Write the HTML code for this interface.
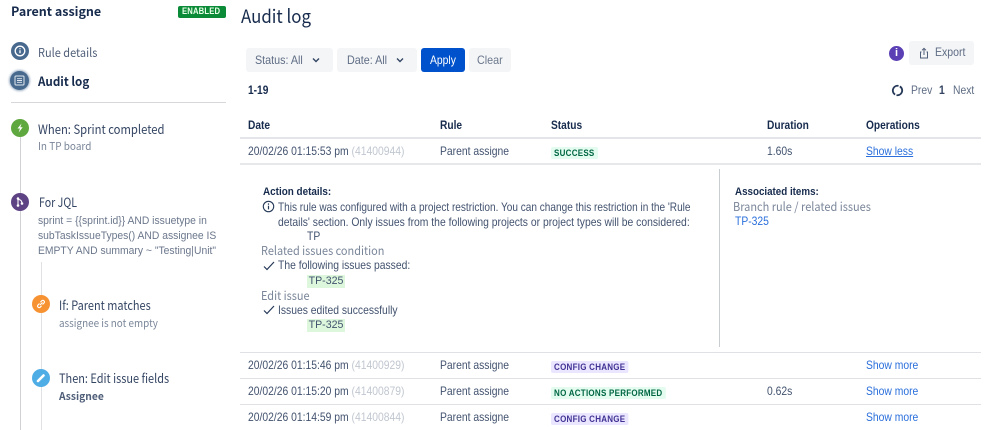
<!DOCTYPE html>
<html><head><meta charset="utf-8">
<style>
html,body{margin:0;padding:0;background:#fff}
#p{position:relative;width:999px;height:430px;overflow:hidden;background:#fff;font-family:"Liberation Sans",sans-serif;font-size:11.7px;color:#42526e}
#p div,#p svg{position:absolute}
.t{white-space:nowrap;line-height:14px;transform:scaleX(.885);transform-origin:left center}
.n{font-family:"Noto Sans CJK JP","Liberation Sans",sans-serif;transform:scaleX(.9)}
.d{color:#42526e}
.g{color:#c1c7d0}
.h{font-weight:bold;color:#172b4d;font-size:11.5px}
.l{background:#dfe1e4;height:1px}
.lk{color:#2a6fdb}
.lz{font-size:9.2px;font-weight:bold;letter-spacing:.3px;height:12px;line-height:12px;padding:0 3.5px;border-radius:2px;white-space:nowrap;transform:scaleX(.87);transform-origin:left center}
.pu{background:#eae6ff;color:#403294}
.gr{background:#e3fcef;color:#006644}
.btn{background:#f4f5f7;border-radius:3px;height:24px}
.c{border-radius:50%}
.tag{background:#dcf7dc;color:#42526e;width:38px;text-align:center;height:13px;line-height:13px;white-space:nowrap;font-size:10.6px}
</style></head><body><div id="p">

<div class="t n" style="left:11px;top:4px;font-weight:bold;font-size:12.5px;color:#172b4d;transform:none">Parent assigne</div>
<div style="left:178px;top:6px;width:48px;height:12px;background:#0b8a37;border-radius:2px"></div>
<div class="t" style="left:182px;top:5px;color:#e8ffe8;font-size:9.6px;font-weight:bold;letter-spacing:.2px;transform:scaleX(.8)">ENABLED</div>

<div class="c" style="left:11px;top:42px;width:18px;height:18px;background:#48698e"></div>
<svg style="left:11px;top:42px" width="18" height="18" viewBox="0 0 18 18"><circle cx="9" cy="9" r="4.8" fill="none" stroke="#fff" stroke-width="1.3"/><path d="M9 8.3v3M9 6.2v1" stroke="#fff" stroke-width="1.3"/></svg>
<div class="t n" style="left:38px;top:45px;font-size:12.2px;color:#505f79">Rule details</div>

<div class="c" style="left:10px;top:71px;width:19px;height:19px;background:#48698e;box-shadow:0 0 2px 1px #9fb1c6"></div>
<svg style="left:10px;top:71px" width="19" height="19" viewBox="0 0 19 19"><rect x="5" y="5" width="9" height="9" rx="1" fill="none" stroke="#dfe6ee" stroke-width="1"/><path d="M7 7.7h5M7 9.5h5M7 11.3h5" stroke="#dfe6ee" stroke-width=".9"/></svg>
<div class="t n" style="left:38px;top:74px;font-weight:bold;font-size:12.5px;color:#172b4d;transform:scaleX(.93)">Audit log</div>

<div style="left:11px;top:102px;width:215px;height:1px;background:#d5d7da"></div>

<div style="left:20px;top:130px;width:1px;height:300px;background:#d0d2d5"></div>
<div style="left:41px;top:262px;width:1px;height:168px;background:#dfe1e4"></div>

<div class="c" style="left:11px;top:119px;width:18px;height:18px;background:#5fa83f"></div>
<svg style="left:11px;top:119px" width="18" height="18" viewBox="0 0 18 18"><path d="M10.5 4.5L6.5 9.5h2.4l-1.2 4 4-5.2H9.3z" fill="#fff"/></svg>
<div class="t n" style="left:38px;top:122px;font-size:12.5px;color:#344563">When: Sprint completed</div>
<div class="t n" style="left:38px;top:140px;font-size:10.5px;color:#7a8699;transform:scaleX(.95)">In TP board</div>

<div class="c" style="left:11px;top:193px;width:18px;height:18px;background:#5e4384"></div>
<svg style="left:11px;top:193px" width="18" height="18" viewBox="0 0 18 18"><path d="M7 5v8M7 6.5c3 0 4 1.5 4 4" fill="none" stroke="#fff" stroke-width="1.1"/><circle cx="7" cy="5.5" r="1.3" fill="#fff"/><circle cx="7" cy="12.5" r="1.3" fill="#fff"/><circle cx="11" cy="10.5" r="1.3" fill="#fff"/></svg>
<div class="t n" style="left:39px;top:195px;font-size:12.5px;color:#344563;transform:scaleX(.85)">For JQL</div>
<div class="t" style="left:38px;top:214px;font-size:11.2px;color:#6b778c;line-height:15px;transform:scaleX(.925)">sprint = {{sprint.id}} AND issuetype in<br>subTaskIssueTypes() AND assignee IS<br>EMPTY AND summary ~ "Testing|Unit"</div>

<div class="c" style="left:32px;top:295px;width:18px;height:18px;background:#f79232"></div>
<svg style="left:32px;top:295px" width="18" height="18" viewBox="0 0 18 18"><path d="M8 10l2.5-2.5M7.5 8.5L5.8 10.2a1.6 1.6 0 0 0 2.2 2.2l1.6-1.7M10.5 9.5l1.7-1.7A1.6 1.6 0 0 0 10 5.6L8.4 7.3" fill="none" stroke="#fff" stroke-width="1.1"/></svg>
<div class="t n" style="left:59px;top:298px;font-size:12.5px;color:#344563;transform:scaleX(.875)">If: Parent matches</div>
<div class="t n" style="left:59px;top:317px;font-size:10.5px;color:#7a8699;transform:scaleX(.94)">assignee is not empty</div>

<div class="c" style="left:32px;top:369px;width:18px;height:18px;background:#4fade6"></div>
<svg style="left:32px;top:369px" width="18" height="18" viewBox="0 0 18 18"><path d="M6 12l5.5-5.5" stroke="#fff" stroke-width="2.6" stroke-linecap="round"/></svg>
<div class="t n" style="left:59px;top:371px;font-size:12.5px;color:#344563;transform:scaleX(.875)">Then: Edit issue fields</div>
<div class="t n" style="left:59px;top:390px;font-size:10.5px;font-weight:bold;color:#505f79;transform:scaleX(.98)">Assignee</div>

<div class="t n" style="left:241px;top:5px;font-size:18.5px;line-height:22px;color:#172b4d;transform:scaleX(.91)">Audit log</div>

<div class="btn" style="left:246px;top:48px;width:87px"></div>
<div class="t" style="left:255px;top:54px;color:#5e6c84;transform:scaleX(.92)">Status: All</div>
<svg style="left:312px;top:56px" width="8" height="8" viewBox="0 0 8 8"><path d="M1 2.5l3 3 3-3" fill="none" stroke="#344563" stroke-width="1.4"/></svg>
<div class="btn" style="left:337px;top:48px;width:80px"></div>
<div class="t" style="left:347px;top:54px;color:#5e6c84;transform:scaleX(.92)">Date: All</div>
<svg style="left:396px;top:56px" width="8" height="8" viewBox="0 0 8 8"><path d="M1 2.5l3 3 3-3" fill="none" stroke="#344563" stroke-width="1.4"/></svg>
<div class="btn" style="left:421px;top:48px;width:44px;background:#0052cc"></div>
<div class="t" style="left:430px;top:54px;color:#fff;">Apply</div>
<div class="btn" style="left:469px;top:48px;width:42px"></div>
<div class="t" style="left:477px;top:54px;color:#6b778c;transform:scaleX(.92)">Clear</div>

<div class="c" style="left:889px;top:46px;width:15px;height:15px;background:#5b3fb5;color:#fff;font-size:11px;font-weight:bold;text-align:center;line-height:15px">i</div>
<div class="btn" style="left:909px;top:41px;width:65px"></div>
<div class="t" style="left:935px;top:46px;color:#5e6c84;transform:scaleX(.9)">Export</div>
<svg style="left:918px;top:47px" width="12" height="12" viewBox="0 0 12 12"><path d="M3.5 5H2.5v6h7V5H8.5M6 8V1.5M4 3.3L6 1.3l2 2" fill="none" stroke="#505f79" stroke-width="1"/></svg>

<div class="t h" style="left:248px;top:84px">1-19</div>
<svg style="left:891px;top:84px" width="13" height="13" viewBox="0 0 13 13"><circle cx="6.5" cy="6.5" r="4.7" fill="none" stroke="#253858" stroke-width="1.8" stroke-dasharray="13.2 1.5" transform="rotate(-60 6.5 6.5)"/></svg>
<div class="t" style="left:911px;top:84px;color:#5e6c84">Prev</div>
<div class="t" style="left:939px;top:84px;font-weight:bold;color:#344563">1</div>
<div class="t" style="left:953px;top:84px;color:#5e6c84">Next</div>

<div class="t h" style="left:248px;top:119px">Date</div>
<div class="t h" style="left:440px;top:119px">Rule</div>
<div class="t h" style="left:551px;top:119px">Status</div>
<div class="t h" style="left:767px;top:119px">Duration</div>
<div class="t h" style="left:866px;top:119px">Operations</div>
<div style="left:240px;top:137px;width:741px;height:2px;background:#e3e5e8"></div>

<div class="t d" style="left:248px;top:145px">20/02/26 01:15:53 pm <span class="g">(41400944)</span></div>
<div class="t d" style="left:440px;top:145px">Parent assigne</div>
<div class="lz gr" style="left:551px;top:147px">SUCCESS</div>
<div class="t d" style="left:767px;top:145px">1.60s</div>
<div class="t lk" style="left:866px;top:145px;text-decoration:underline">Show less</div>
<div style="left:240px;top:163px;width:741px;height:2px;background:#e6e8ea"></div>

<div class="t h" style="left:263px;top:185px;font-size:11px;transform:scaleX(.9)">Action details:</div>
<svg style="left:262px;top:200px" width="13" height="13" viewBox="0 0 13 13"><circle cx="6.5" cy="6.5" r="5.2" fill="none" stroke="#253858" stroke-width="1.1"/><path d="M6.5 5.8v3.6M6.5 3.4v1.3" stroke="#253858" stroke-width="1.2"/></svg>
<div class="t d" style="left:278px;top:200px;font-size:11.6px;line-height:15px;transform:scaleX(.868)">This rule was configured with a project restriction. You can change this restriction in the 'Rule</div>
<div class="t d" style="left:278px;top:215px;font-size:11.6px;line-height:15px;transform:scaleX(.893)">details' section. Only issues from the following projects or project types will be considered:</div>
<div class="t d" style="left:307px;top:230px">TP</div>
<div class="t n" style="left:261px;top:244px;font-size:12px;color:#7a8699;transform:scaleX(.91)">Related issues condition</div>
<svg style="left:263px;top:260px" width="12" height="12" viewBox="0 0 12 12"><path d="M1 6.5l3 3 7-7.5" fill="none" stroke="#253858" stroke-width="1.2"/></svg>
<div class="t d" style="left:278px;top:259px">The following issues passed:</div>
<div class="tag" style="left:307px;top:275px">TP-325</div>
<div class="t n" style="left:261px;top:289px;font-size:12px;color:#7a8699;transform:scaleX(.91)">Edit issue</div>
<svg style="left:263px;top:304px" width="12" height="12" viewBox="0 0 12 12"><path d="M1 6.5l3 3 7-7.5" fill="none" stroke="#253858" stroke-width="1.2"/></svg>
<div class="t d" style="left:278px;top:304px">Issues edited successfully</div>
<div class="tag" style="left:307px;top:319px">TP-325</div>

<div style="left:719px;top:169px;width:1px;height:178px;background:#c9ccd0"></div>
<div class="t h" style="left:735px;top:185px;font-size:11px;transform:scaleX(.89)">Associated items:</div>
<div class="t n" style="left:733px;top:200px;font-size:12px;color:#7a8699;transform:scaleX(.914)">Branch rule / related issues</div>
<div class="t lk" style="left:735px;top:215px">TP-325</div>

<div class="l" style="left:240px;top:352px;width:741px"></div>
<div class="t d" style="left:248px;top:359px">20/02/26 01:15:46 pm <span class="g">(41400929)</span></div>
<div class="t d" style="left:440px;top:359px">Parent assigne</div>
<div class="lz pu" style="left:551px;top:361px">CONFIG CHANGE</div>
<div class="t lk" style="left:866px;top:359px">Show more</div>

<div class="l" style="left:240px;top:378px;width:741px"></div>
<div class="t d" style="left:248px;top:385px">20/02/26 01:15:20 pm <span class="g">(41400879)</span></div>
<div class="t d" style="left:440px;top:385px">Parent assigne</div>
<div class="lz gr" style="left:551px;top:387px">NO ACTIONS PERFORMED</div>
<div class="t d" style="left:767px;top:385px">0.62s</div>
<div class="t lk" style="left:866px;top:385px">Show more</div>

<div class="l" style="left:240px;top:404px;width:741px"></div>
<div class="t d" style="left:248px;top:411px">20/02/26 01:14:59 pm <span class="g">(41400844)</span></div>
<div class="t d" style="left:440px;top:411px">Parent assigne</div>
<div class="lz pu" style="left:551px;top:413px">CONFIG CHANGE</div>
<div class="t lk" style="left:866px;top:411px">Show more</div>

</div></body></html>
